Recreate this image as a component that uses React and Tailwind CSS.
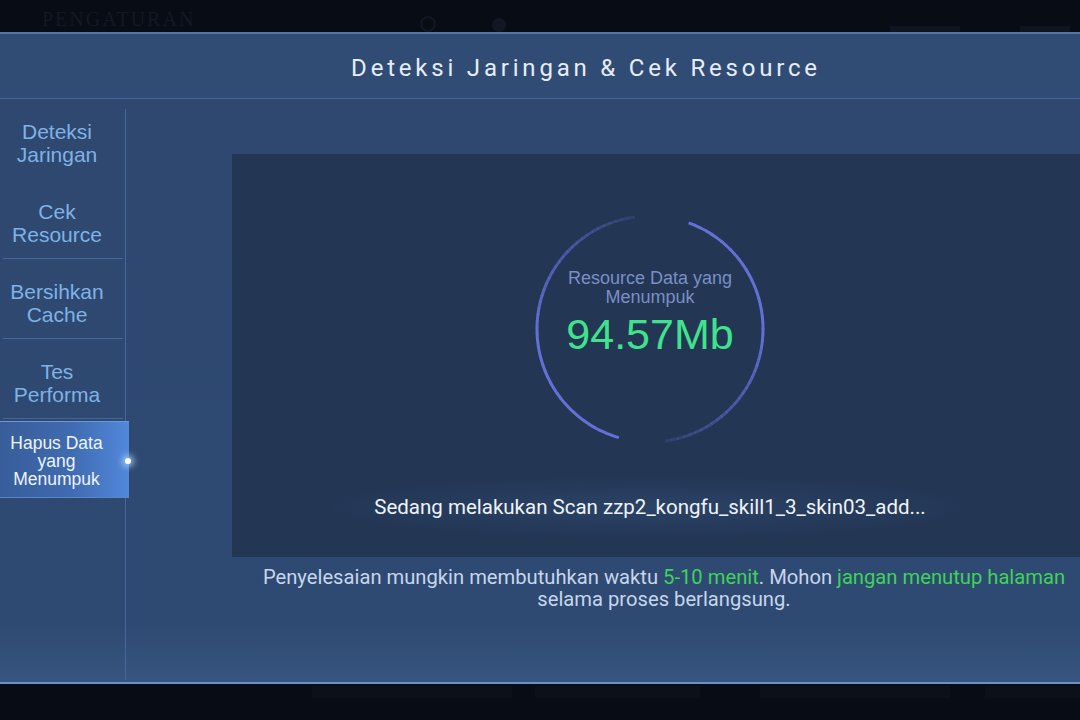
import React from "react";

function polar(cx, cy, r, deg) {
  const a = (deg * Math.PI) / 180;
  return [cx + r * Math.cos(a), cy + r * Math.sin(a)];
}

function FadingArc({ cx, cy, r, from, to, color }) {
  const n = 48;
  const segs = [];
  const step = (to - from) / n;
  for (let i = 0; i < n; i++) {
    const a0 = from + step * i;
    const a1 = from + step * (i + 1) + 0.4;
    const [x0, y0] = polar(cx, cy, r, a0);
    const [x1, y1] = polar(cx, cy, r, a1);
    const t = i / n;
    const op = t < 0.45 ? 1 : 1 - ((t - 0.45) / 0.55) * 0.85;
    segs.push(
      <path
        key={i}
        d={`M ${x0} ${y0} A ${r} ${r} 0 0 1 ${x1} ${y1}`}
        stroke={color}
        strokeWidth="3"
        fill="none"
        opacity={op}
      />
    );
  }
  return <g>{segs}</g>;
}

const items = [
  ["Deteksi", "Jaringan"],
  ["Cek", "Resource"],
  ["Bersihkan", "Cache"],
  ["Tes", "Performa"],
];

export default function App() {
  return (
    <div className="w-[1080px] h-[720px] bg-[#080c14] overflow-hidden flex flex-col">
      {/* top dark strip */}
      <div className="h-[32px] relative overflow-hidden flex items-start">
        <div
          className="absolute left-[42px] top-[8px] text-[20px] leading-[22px] tracking-[2px] text-[#131925]"
          style={{ fontFamily: '"Liberation Serif", serif' }}
        >
          PENGATURAN
        </div>
        <div className="absolute left-[420px] top-[16px] w-[16px] h-[16px] rounded-full border-2 border-[#111724]" />
        <div className="absolute left-[492px] top-[18px] w-[14px] h-[14px] rounded-full bg-[#111724]" />
        <div className="absolute left-[890px] top-[26px] w-[70px] h-[6px] bg-[#0f1420]" />
        <div className="absolute left-[1020px] top-[26px] w-[50px] h-[6px] bg-[#0f1420]" />
      </div>

      {/* main panel */}
      <div className="h-[652px] flex flex-col bg-[#2e4870] border-t-2 border-[#5475a6] border-b-2 border-b-[#6b90c6]">
        {/* header */}
        <div className="h-[65px] shrink-0 flex items-center justify-center bg-[#304c74] border-b border-[#45669a]">
          <div
            className="text-[24px] tracking-[3.8px] text-[#e6edf7] ml-[92px] mt-[3px]"
            style={{ fontFamily: "Roboto, sans-serif" }}
          >
            Deteksi Jaringan &amp; Cek Resource
          </div>
        </div>

        {/* body */}
        <div className="flex-1 flex bg-[linear-gradient(to_bottom,#2e4870_0%,#2f4a72_90%,#36557f_100%)]">
          {/* sidebar */}
          <div className="w-[126px] shrink-0 flex flex-col relative">
            <div className="absolute right-0 top-[10px] bottom-[2px] w-px bg-[#45679a]" />
            {items.map((it, i) => (
              <div
                key={i}
                className={
                  "h-[80px] flex flex-col items-center justify-center pt-[8px] pr-[12px] mx-[3px] " +
                  (i >= 1 ? "border-b border-[#45669a]" : "")
                }
                style={{ fontFamily: '"Liberation Sans", Arial, sans-serif' }}
              >
                <div className="text-[21px] leading-[23px] text-[#7fb2e6]">{it[0]}</div>
                <div className="text-[21px] leading-[23px] text-[#7fb2e6]">{it[1]}</div>
              </div>
            ))}
            <div
              className="relative w-[129px] h-[77px] mt-[2px] flex flex-col items-center justify-center bg-[linear-gradient(to_right,#385d99_0%,#3f6bb0_55%,#5288db_100%)] border-t border-[#6d97d6] border-b border-b-[#5a86c8] pr-[16px] pt-[2px]"
              style={{ fontFamily: '"Liberation Sans", Arial, sans-serif' }}
            >
              <div className="text-[17.5px] leading-[18px] text-[#eef4fc] whitespace-nowrap">Hapus Data</div>
              <div className="text-[17.5px] leading-[18px] text-[#eef4fc]">yang</div>
              <div className="text-[17.5px] leading-[18px] text-[#eef4fc]">Menumpuk</div>
              <div className="absolute right-[-2px] top-[36px] w-[6px] h-[6px] rounded-full bg-white shadow-[0_0_6px_3px_rgba(170,210,255,0.8)]" />
            </div>
          </div>

          {/* content */}
          <div className="flex-1 flex flex-col pl-[106px] pt-[55px] overflow-hidden">
            <div className="w-[900px] h-[403px] shrink-0 bg-[#233654] relative">
              <div className="w-[836px] flex flex-col items-center">
                <div className="mt-[59px] w-[232px] h-[232px] relative flex flex-col items-center">
                  <svg width="232" height="232" className="absolute inset-0">
                    <FadingArc cx={116} cy={116} r={113} from={106} to={262} color="#6370d6" />
                    <FadingArc cx={116} cy={116} r={113} from={-70} to={82} color="#6370d6" />
                  </svg>
                  <div
                    className="relative mt-[56px] flex flex-col items-center text-[18px] leading-[19px] text-[#7a8fc6] whitespace-nowrap"
                    style={{ fontFamily: '"Liberation Sans", Arial, sans-serif' }}
                  >
                    <div>Resource Data yang</div>
                    <div>Menumpuk</div>
                  </div>
                  <div
                    className="relative mt-[4px] text-[43px] leading-[46px] text-[#3fe38c]"
                    style={{ fontFamily: '"Liberation Sans", Arial, sans-serif' }}
                  >
                    94.57Mb
                  </div>
                </div>
                <div className="mt-[32px] w-[640px] h-[60px] flex items-center justify-center bg-[radial-gradient(ellipse_at_center,rgba(60,90,135,0.35)_0%,rgba(50,78,120,0.18)_50%,rgba(35,54,84,0)_75%)]">
                  <div
                    className="text-[20.5px] text-[#eef3fa] whitespace-nowrap"
                    style={{ fontFamily: "Roboto, sans-serif" }}
                  >
                    Sedang melakukan Scan zzp2_kongfu_skill1_3_skin03_add...
                  </div>
                </div>
              </div>
            </div>
            <div
              className="w-[864px] mt-[9px] flex flex-col items-center text-[20.2px] leading-[22px] text-[#c6d6ec] whitespace-nowrap"
              style={{ fontFamily: "Roboto, sans-serif" }}
            >
              <div>
                Penyelesaian mungkin membutuhkan waktu{" "}
                <span className="text-[#3fd25a]">5-10 menit</span>. Mohon{" "}
                <span className="text-[#3fd25a]">jangan menutup halaman</span>
              </div>
              <div>selama proses berlangsung.</div>
            </div>
          </div>
        </div>
      </div>

      {/* bottom dark strip */}
      <div className="flex-1 relative">
        <div className="absolute left-[312px] top-[2px] w-[200px] h-[12px] bg-[#0c1019]" />
        <div className="absolute left-[535px] top-[2px] w-[165px] h-[12px] bg-[#0c1019]" />
        <div className="absolute left-[760px] top-[2px] w-[190px] h-[12px] bg-[#0c1019]" />
        <div className="absolute left-[985px] top-[2px] w-[95px] h-[12px] bg-[#0c1019]" />
      </div>
    </div>
  );
}
